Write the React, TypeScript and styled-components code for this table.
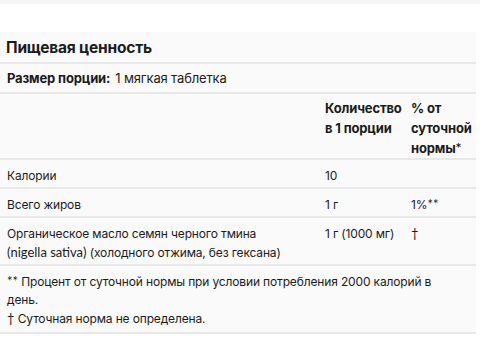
import { ReactNode, memo } from 'react';
import styled, { createGlobalStyle } from 'styled-components';

interface Row {
  name: ReactNode;
  amount: string;
  dv: ReactNode;
}

const App = () => {
  const rows: Row[] = [
    { name: 'Калории', amount: '10', dv: '' },
    {
      name: 'Всего жиров',
      amount: '1 г',
      dv: (
        <>
          1%<LatinStyle>**</LatinStyle>
        </>
      ),
    },
    {
      name: (
        <>
          Органическое масло семян черного тмина <LatinStyle>(nigella sativa)</LatinStyle> (холодного
          отжима, без гексана)
        </>
      ),
      amount: '1 г (1000 мг)',
      dv: <LatinStyle>†</LatinStyle>,
    },
  ];

  return (
    <>
      <GlobalStyle />
      <TopStripStyle />
      <PanelStyle>
        <TitleStyle>Пищевая ценность</TitleStyle>
        <ServingStyle>
          <b>Размер порции:</b> 1 мягкая таблетка
        </ServingStyle>
        <HeadGridStyle>
          <HeadCellStyle />
          <HeadCellStyle>Количество в 1 порции</HeadCellStyle>
          <HeadCellStyle>
            % от суточной нормы<LatinStyle>*</LatinStyle>
          </HeadCellStyle>
        </HeadGridStyle>
        {rows.map((row, i) => (
          <GridStyle key={i}>
            <CellStyle $wide>{row.name}</CellStyle>
            <CellStyle>{row.amount}</CellStyle>
            <CellStyle>{row.dv}</CellStyle>
          </GridStyle>
        ))}
        <FootnoteStyle>
          <LatinStyle>**</LatinStyle> Процент от суточной нормы при условии потребления 2000 калорий в день.
          <br />
          <LatinStyle>†</LatinStyle> Суточная норма не определена.
        </FootnoteStyle>
      </PanelStyle>
    </>
  );
};

const GlobalStyle = createGlobalStyle`
  html, body {
    margin: 0;
    padding: 0;
    background: #fff;
  }
  body {
    font-family: Inter, 'Noto Sans', sans-serif;
    color: #1b1b1b;
    -webkit-font-smoothing: antialiased;
  }
`;

const TopStripStyle = styled.div`
  height: 4px;
  background-color: #f6f6f6;
`;

const PanelStyle = styled.section`
  margin-top: 28px;
  width: 476px;
  background-color: #fafafa;
  font-size: 12px;
  letter-spacing: -0.15px;
`;

const LatinStyle = styled.span`
  font-family: Lato, 'Liberation Sans', sans-serif;
  font-size: 1.08em;
  letter-spacing: 0;
`;

const RowBase = styled.div`
  border-bottom: 2px solid #e8e8e8;
  padding: 0 7px;
`;

const TitleStyle = styled(RowBase)`
  height: 30px;
  display: flex;
  align-items: center;
  font-size: 15.5px;
  font-weight: 700;
  letter-spacing: -0.2px;
  padding-left: 6px;
`;

const ServingStyle = styled(RowBase)`
  height: 28px;
  display: flex;
  align-items: center;
  gap: 5px;
  font-size: 13px;
  b {
    font-weight: 700;
  }
`;

const GridStyle = styled(RowBase)`
  display: grid;
  grid-template-columns: 318px 86px 1fr;
  line-height: 19px;
  padding-top: 6px;
  padding-bottom: 2px;
`;

const HeadGridStyle = styled(GridStyle)`
  line-height: 20px;
  padding-top: 4px;
  padding-bottom: 0;
  font-size: 13px;
  font-weight: 700;
`;

const HeadCellStyle = styled.div`
  padding-right: 4px;
`;

const CellStyle = styled.div<{ $wide?: boolean }>`
  padding-right: ${({ $wide }) => ($wide ? '30px' : '4px')};
`;

const FootnoteStyle = styled(RowBase)`
  padding-top: 6px;
  padding-bottom: 4px;
  line-height: 18px;
  padding-right: 30px;
`;

export default memo(App);
